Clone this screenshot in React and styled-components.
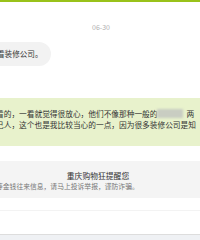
import React from 'react';
import styled, { createGlobalStyle } from 'styled-components';

const GlobalStyle = createGlobalStyle`
  html, body {
    margin: 0;
    padding: 0;
    background: #ffffff;
  }
  body {
    font-family: "Noto Sans CJK SC", "Liberation Sans", sans-serif;
  }
`;

const Page = styled.div`
  width: 200px;
  height: 240px;
  overflow: hidden;
  border-top: 2px solid #99c21a;
  box-sizing: border-box;
  display: flex;
  flex-direction: column;
`;

const DateLabel = styled.div`
  margin-top: 20px;
  height: 10px;
  line-height: 10px;
  font-size: 7px;
  color: #b0b0b0;
  text-align: center;
  padding-left: 2px;
`;

const Row = styled.div`
  display: flex;
  margin-top: ${({ gap }) => gap}px;
`;

const Bubble = styled.div`
  margin-left: -9px;
  height: 24px;
  line-height: 24px;
  padding: 0 8px 0 6px;
  font-size: 7.6px;
  color: #333333;
  background: #f2f2f2;
  border-radius: 0 12px 12px 0;
  white-space: nowrap;
`;

const QuoteBlock = styled.div`
  margin-top: 32px;
  height: 48px;
  box-sizing: border-box;
  padding: 10px 0 0 0;
  background: #e8f2cc;
  font-size: 7.7px;
  line-height: 11px;
  color: #333333;
`;

const QuoteLine = styled.div`
  white-space: nowrap;
  margin-left: -4px;
`;

const Blur = styled.span`
  display: inline-block;
  width: 26px;
  height: 9px;
  margin: 0 3px 0 0;
  vertical-align: -1px;
  background: #c9cdc2;
  filter: blur(1.2px);
`;

const Notice = styled.div`
  margin-top: 15px;
  height: 37px;
  box-sizing: border-box;
  padding-top: 10px;
  background: #f4f4f4;
`;

const NoticeTitle = styled.div`
  text-align: center;
  font-size: 7.8px;
  line-height: 10px;
  color: #333333;
  padding-right: 4px;
`;

const NoticeText = styled.div`
  margin-left: -4px;
  font-size: 6.8px;
  line-height: 10px;
  color: #777777;
  white-space: nowrap;
`;

const Divider = styled.div`
  margin-top: 12px;
  height: 1px;
  background: #f3f3f3;
`;

const Footer = styled.div`
  margin-top: 23px;
  flex: 1;
  border-top: 1px solid #dddddd;
  background: #eff1f4;
`;

export default function App() {
  return (
    <>
      <GlobalStyle />
      <Page>
        <DateLabel>06-30</DateLabel>
        <Row gap={10}>
          <Bubble>看装修公司。</Bubble>
        </Row>
        <QuoteBlock>
          <QuoteLine>
            看的，一看就觉得很放心，他们不像那种一般的<Blur />两
          </QuoteLine>
          <QuoteLine>己人，这个也是我比较当心的一点，因为很多装修公司是知</QuoteLine>
        </QuoteBlock>
        <Notice>
          <NoticeTitle>重庆购物狂提醒您</NoticeTitle>
          <NoticeText>等金钱往来信息，请马上投诉举报，谨防诈骗。</NoticeText>
        </Notice>
        <Divider />
        <Footer />
      </Page>
    </>
  );
}
